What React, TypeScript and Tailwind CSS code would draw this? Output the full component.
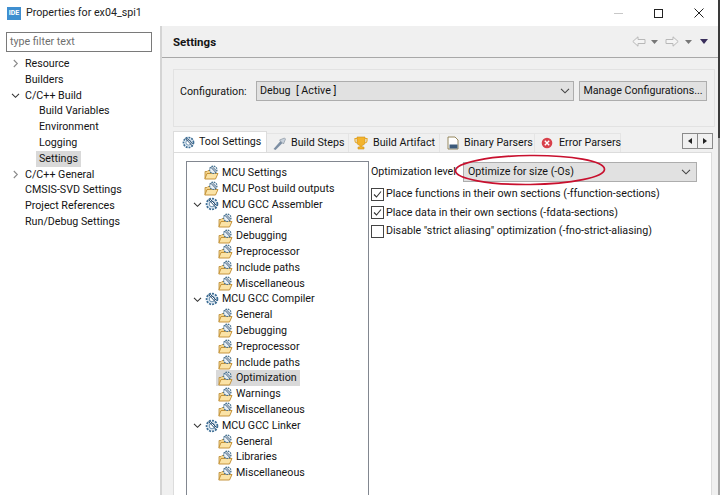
import React from "react";

const font = { fontFamily: 'Roboto, "Noto Sans", sans-serif' };

function Gear({ size = 14 }: { size?: number }) {
  return (
    <svg width={size} height={size} viewBox="0 0 14 14" className="shrink-0">
      <circle cx="7" cy="7" r="5.4" fill="#dfe9f2" stroke="#3f6f96" strokeWidth="1.8" strokeDasharray="2 1.1" />
      <circle cx="7" cy="7" r="2.8" fill="#fff" stroke="#5d87a8" strokeWidth="0.9" />
      <path d="M3.5 2.5 L11 10.5 M5.5 2.5 L11.5 8.5" stroke="#2d4f70" strokeWidth="1" />
    </svg>
  );
}

function FolderGear() {
  return (
    <svg width="15" height="15" viewBox="0 0 15 15" className="shrink-0">
      <path d="M1 6.5 H3 L4 5.5 H7 V13.5 H1 Z" fill="#f5d48a" stroke="#b98a34" strokeWidth="0.8" />
      <path d="M3 8.5 H14 L11.5 14 H0.8 Z" fill="#fbe3a6" stroke="#bf8b2e" strokeWidth="0.9" />
      <circle cx="9.3" cy="4.8" r="3.7" fill="#e9f0f6" stroke="#44708f" strokeWidth="1.2" strokeDasharray="1.6 0.9" />
      <path d="M6.8 2.2 L11.8 7.4 M8.5 2 L12.6 6" stroke="#2d4f70" strokeWidth="0.9" />
    </svg>
  );
}

function Chevron({ open }: { open: boolean }) {
  return (
    <svg width="9" height="9" viewBox="0 0 9 9" className="shrink-0" fill="none" stroke={open ? "#333333" : "#8a8a8a"} strokeWidth="1.1">
      {open ? <path d="M1 2.8 L4.5 6.3 L8 2.8" /> : <path d="M2.8 1 L6.3 4.5 L2.8 8" />}
    </svg>
  );
}

function SelectChevron() {
  return (
    <svg width="10" height="6" viewBox="0 0 10 6" fill="none" stroke="#444444" strokeWidth="1.1" className="shrink-0">
      <path d="M1 0.8 L5 4.8 L9 0.8" />
    </svg>
  );
}

function Check({ checked }: { checked: boolean }) {
  return (
    <span className="w-[13px] h-[13px] border border-[#444444] bg-white flex items-center justify-center shrink-0">
      {checked && (
        <svg width="11" height="11" viewBox="0 0 11 11" fill="none" stroke="#333333" strokeWidth="1.1">
          <path d="M2 5.5 L4.5 8 L9 2.5" />
        </svg>
      )}
    </span>
  );
}

function Side({ label, indent, chevron, selected }: { label: string; indent: 0 | 1; chevron?: boolean | "closed"; selected?: boolean }) {
  return (
    <div className={`h-[15.8px] flex items-center ${indent ? "pl-[36px]" : "pl-[11px]"}`}>
      {!indent && (
        <span className="w-[11px] flex items-center shrink-0">
          {chevron && <Chevron open={chevron === true} />}
        </span>
      )}
      <span className={`px-[3px] leading-[15.8px] ${selected ? "bg-[#d9d9d9]" : ""}`}>{label}</span>
    </div>
  );
}

type Row = { label: string; level: 0 | 1; group?: boolean; selected?: boolean };
const rows: Row[] = [
  { label: "MCU Settings", level: 0 },
  { label: "MCU Post build outputs", level: 0 },
  { label: "MCU GCC Assembler", level: 0, group: true },
  { label: "General", level: 1 },
  { label: "Debugging", level: 1 },
  { label: "Preprocessor", level: 1 },
  { label: "Include paths", level: 1 },
  { label: "Miscellaneous", level: 1 },
  { label: "MCU GCC Compiler", level: 0, group: true },
  { label: "General", level: 1 },
  { label: "Debugging", level: 1 },
  { label: "Preprocessor", level: 1 },
  { label: "Include paths", level: 1 },
  { label: "Optimization", level: 1, selected: true },
  { label: "Warnings", level: 1 },
  { label: "Miscellaneous", level: 1 },
  { label: "MCU GCC Linker", level: 0, group: true },
  { label: "General", level: 1 },
  { label: "Libraries", level: 1 },
  { label: "Miscellaneous", level: 1 },
];

function TreeRow({ r }: { r: Row }) {
  return (
    <div className={`h-[15.8px] flex items-center ${r.level ? "pl-[29px]" : "pl-[6px]"}`}>
      {r.level === 0 && (
        <span className="w-[11px] shrink-0 flex items-center">{r.group && <Chevron open />}</span>
      )}
      <div className={`flex items-center h-[15.8px] ${r.level ? "pl-[2px]" : ""} ${r.selected ? "bg-[#d9d9d9]" : ""}`}>
        {r.group ? (
          <span className="w-[15px] flex justify-center shrink-0"><Gear size={14} /></span>
        ) : (
          <FolderGear />
        )}
        <span className="pl-[3px] pr-[3px] leading-[15.8px]">{r.label}</span>
      </div>
    </div>
  );
}

function Tab({ children, label, active, w, pl, box }: { children: React.ReactNode; label: string; active?: boolean; w: string; pl: string; box: string }) {
  return (
    <div className={`${w} ${pl} flex items-center shrink-0 ${active ? "h-[21px] bg-white border-t border-x border-[#dcdcdc] relative z-10" : "h-[19px] bg-[#f0f0f0] border-t border-r border-[#e4e4e4]"}`}>
      <span className={`${box} shrink-0 flex items-center`}>{children}</span>
      <span className="pt-px">{label}</span>
    </div>
  );
}

export default function App() {
  return (
    <div className="w-[720px] h-[495px] bg-white text-[10.7px] text-[#141414] overflow-hidden flex relative whitespace-nowrap" style={font}>
      <div className="w-[718px] shrink-0 flex flex-col">
        {/* Title bar */}
        <div className="h-[26px] flex items-center shrink-0 pl-[7px]">
          <span className="w-[14px] h-[13px] bg-[#3f8fd0] text-white text-[7px] font-bold flex items-center justify-center leading-none">IDE</span>
          <span className="ml-[5px] text-[#222222]">Properties for ex04_spi1</span>
          <div className="ml-auto flex items-center pr-[14px] gap-[31px]">
            <span className="w-[9px] h-px bg-[#c8c8c8]" />
            <span className="w-[9px] h-[9px] border border-[#222222]" />
            <svg width="10" height="10" viewBox="0 0 10 10" stroke="#222222" strokeWidth="1"><path d="M0.5 0.5 L9.5 9.5 M9.5 0.5 L0.5 9.5" /></svg>
          </div>
        </div>

        <div className="flex flex-1 min-h-0">
          {/* Left panel */}
          <div className="w-[160px] shrink-0 pl-[6px] pt-[6px]">
            <div className="w-[146px] h-[20px] border border-[#7a7a7a] pl-[3px] flex items-center text-[#6f6f6f]">type filter text</div>
            <div className="-ml-[6px] mt-[4px]">
              <Side label="Resource" indent={0} chevron="closed" />
              <Side label="Builders" indent={0} />
              <Side label="C/C++ Build" indent={0} chevron />
              <Side label="Build Variables" indent={1} />
              <Side label="Environment" indent={1} />
              <Side label="Logging" indent={1} />
              <Side label="Settings" indent={1} selected />
              <Side label="C/C++ General" indent={0} chevron="closed" />
              <Side label="CMSIS-SVD Settings" indent={0} />
              <Side label="Project References" indent={0} />
              <Side label="Run/Debug Settings" indent={0} />
            </div>
          </div>

          {/* Right panel */}
          <div className="flex-1 min-w-0 border-l-2 border-[#d4d4d4] bg-white flex flex-col">
            <div className="h-[32px] shrink-0 border-b border-[#a8a8a8] bg-[#f0f0f0] flex items-center pl-[11px] pr-[10px] pt-[3px]">
              <span className="font-bold text-[11.5px]">Settings</span>
              <div className="ml-auto flex items-center -mt-[3px]">
                <svg width="14" height="11" viewBox="0 0 14 11" fill="#f4f4f4" stroke="#b8b8b8"><path d="M0.8 5.5 L6 0.8 V3.5 H13 V7.5 H6 V10.2 Z" /></svg>
                <svg width="7" height="4" viewBox="0 0 7 4" fill="#777777" className="ml-[5px]"><path d="M0 0 H7 L3.5 4 Z" /></svg>
                <svg width="14" height="11" viewBox="0 0 14 11" fill="#f4f4f4" stroke="#b8b8b8" className="ml-[7px]"><path d="M13.2 5.5 L8 0.8 V3.5 H1 V7.5 H8 V10.2 Z" /></svg>
                <svg width="7" height="4" viewBox="0 0 7 4" fill="#777777" className="ml-[6px]"><path d="M0 0 H7 L3.5 4 Z" /></svg>
                <svg width="8" height="5" viewBox="0 0 8 5" fill="#3a2f5c" className="ml-[8px]"><path d="M0 0 H8 L4 5 Z" /></svg>
              </div>
            </div>

            <div className="flex-1 min-h-0 bg-[#f0f0f0] pl-[11px] pr-[6px] pt-[11px] flex flex-col">
              {/* Config group */}
              <div className="h-[58px] w-[542px] shrink-0 border border-[#e2e2e2] flex pl-[6px] pr-[7px] pt-[11px] items-start">
                <span className="w-[76px] shrink-0 mt-[3px]">Configuration:</span>
                <div className="w-[318px] h-[20px] bg-[#e1e1e1] border border-[#adadad] flex items-center pl-[3px] pr-[3px] justify-between">
                  <span className="whitespace-pre">Debug  [ Active ]</span>
                  <SelectChevron />
                </div>
                <div className="ml-[5px] flex-1 h-[20px] bg-[#e1e1e1] border border-[#adadad] flex items-center justify-center">Manage Configurations...</div>
              </div>

              {/* Tabs */}
              <div className="mt-[5px] flex items-end h-[20px] shrink-0 relative">
                <Tab label="Tool Settings" active w="w-[94px]" pl="pl-[8px]" box="w-[17px]"><Gear size={13} /></Tab>
                <Tab label="Build Steps" w="w-[82px]" pl="pl-[5px]" box="w-[19px]">
                  <svg width="15" height="13" viewBox="0 0 14 13"><path d="M1 12 L8 4 L10 6 L3 13 Z" fill="#7c8ea3" /><path d="M7 3 L12 1 L13 2 L11 7 Z" fill="#c9d2dc" stroke="#7e8a96" strokeWidth="0.6" /></svg>
                </Tab>
                <Tab label="Build Artifact" w="w-[91px]" pl="pl-[5px]" box="w-[19px]">
                  <svg width="14" height="14" viewBox="0 0 14 14"><path d="M3 1 H11 V6 Q11 9 8 9.5 V11 H10 V13 H4 V11 H6 V9.5 Q3 9 3 6 Z" fill="#f3b32c" stroke="#d0921a" strokeWidth="0.6" /><path d="M3 2.5 H1 V5 Q1 6.5 3 7 M11 2.5 H13 V5 Q13 6.5 11 7" fill="none" stroke="#e4a524" strokeWidth="1.1" /></svg>
                </Tab>
                <Tab label="Binary Parsers" w="w-[95px]" pl="pl-[7px]" box="w-[17px]">
                  <svg width="12" height="14" viewBox="0 0 12 14"><path d="M1 1 H8 L11 4 V13 H1 Z" fill="#fff" stroke="#8a7a4c" strokeWidth="0.9" /><rect x="2.5" y="8.5" width="8" height="4" fill="#3c5a7a" /></svg>
                </Tab>
                <Tab label="Error Parsers" w="w-[86px]" pl="pl-[6px]" box="w-[18px]">
                  <svg width="12" height="12" viewBox="0 0 12 12"><circle cx="6" cy="6" r="5.3" fill="#d8404a" /><path d="M3.8 3.8 L8.2 8.2 M8.2 3.8 L3.8 8.2" stroke="#fff" strokeWidth="1.4" /></svg>
                </Tab>
                <div className="ml-auto flex mb-[3px] -mr-[1px]">
                  <div className="w-[16px] h-[16px] border border-[#8a8a8a] bg-[#f0f0f0] flex items-center justify-center">
                    <svg width="4" height="6" viewBox="0 0 4 6" fill="#222222"><path d="M4 0 V6 L0 3 Z" /></svg>
                  </div>
                  <div className="w-[15px] h-[16px] border-y border-r border-[#8a8a8a] bg-[#f0f0f0] flex items-center justify-center">
                    <svg width="4" height="6" viewBox="0 0 4 6" fill="#222222"><path d="M0 0 V6 L4 3 Z" /></svg>
                  </div>
                </div>
              </div>

              {/* Tab body */}
              <div className="flex-1 min-h-0 bg-white border-l border-r border-[#dcdcdc] border-t pl-[12px] pt-[8px] flex items-stretch">
                <div className="w-[183px] shrink-0 border-x border-t border-[#828790] pt-[3px] overflow-hidden">
                  {rows.map((r, i) => (
                    <TreeRow key={i} r={r} />
                  ))}
                </div>
                <div className="ml-[2px] flex-1 min-w-0 pr-[14px]">
                  <div className="flex items-center h-[20px] mt-[1px]">
                    <span>Optimization level</span>
                    <div className="ml-auto w-[234px] h-[20px] bg-[#e1e1e1] border border-[#adadad] flex items-center pl-[4px] pr-[5px] justify-between">
                      <span>Optimize for size (-Os)</span>
                      <SelectChevron />
                    </div>
                  </div>
                  <div className="mt-[3px] flex flex-col">
                    <label className="h-[18.5px] flex items-center gap-[2px]"><Check checked /><span>Place functions in their own sections (-ffunction-sections)</span></label>
                    <label className="h-[18.5px] flex items-center gap-[2px]"><Check checked /><span>Place data in their own sections (-fdata-sections)</span></label>
                    <label className="h-[18.5px] flex items-center gap-[2px]"><Check checked={false} /><span>Disable "strict aliasing" optimization (-fno-strict-aliasing)</span></label>
                  </div>
                </div>
              </div>
            </div>
          </div>
        </div>
      </div>
      <div className="w-[2px] shrink-0 flex flex-col">
        <div className="h-[138px] bg-[#3a3a3a]" />
        <div className="flex-1 bg-[#a6a6a6]" />
      </div>

      {/* Hand-drawn annotation ellipse */}
      <svg className="absolute left-[450px] top-[150px] pointer-events-none" width="160" height="40" viewBox="0 0 160 40" fill="none">
        <ellipse cx="80" cy="20" rx="74.5" ry="14.5" stroke="#c8102e" strokeWidth="1.7" transform="rotate(-0.6 80 20)" />
      </svg>
    </div>
  );
}
